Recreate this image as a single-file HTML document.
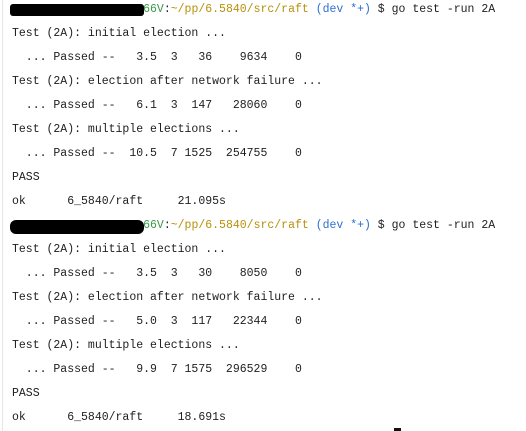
<!DOCTYPE html>
<html><head><meta charset="utf-8"><style>
html,body{margin:0;padding:0;background:#fff;width:526px;height:431px;overflow:hidden;position:relative}
.l{position:absolute;left:12px;font-family:"Liberation Mono",monospace;font-size:11.5px;color:#1e1e1e;white-space:pre;line-height:14px}
.g{color:#3b9a4a}.y{color:#b8900a}.b{color:#2d6fd0}
.blk{position:absolute;background:#000;border-radius:6px}
.bar{position:absolute;left:2px;top:0;width:1px;height:431px;background:#e6e6e6}
</style></head><body>
<div class="bar"></div>
<div class="l" style="top:3px">                   <span class="g">66V</span>:<span class="y">~/pp/6.5840/src/raft</span> <span class="b">(dev *+)</span> $ go test -run 2A</div>
<div class="blk" style="left:10px;top:4px;width:134px;height:12px;border-radius:3px"></div>
<div class="l" style="top:27px">Test (2A): initial election ...</div>
<div class="l" style="top:51px">  ... Passed --   3.5  3   36    9634    0</div>
<div class="l" style="top:75px">Test (2A): election after network failure ...</div>
<div class="l" style="top:99px">  ... Passed --   6.1  3  147   28060    0</div>
<div class="l" style="top:123px">Test (2A): multiple elections ...</div>
<div class="l" style="top:147px">  ... Passed --  10.5  7 1525  254755    0</div>
<div class="l" style="top:171px">PASS</div>
<div class="l" style="top:195px">ok      6_5840/raft     21.095s</div>
<div class="l" style="top:219px">                   <span class="g">66V</span>:<span class="y">~/pp/6.5840/src/raft</span> <span class="b">(dev *+)</span> $ go test -run 2A</div>
<div class="blk" style="left:10px;top:220px;width:134px;height:14px"></div>
<div class="l" style="top:243px">Test (2A): initial election ...</div>
<div class="l" style="top:267px">  ... Passed --   3.5  3   30    8050    0</div>
<div class="l" style="top:291px">Test (2A): election after network failure ...</div>
<div class="l" style="top:315px">  ... Passed --   5.0  3  117   22344    0</div>
<div class="l" style="top:339px">Test (2A): multiple elections ...</div>
<div class="l" style="top:363px">  ... Passed --   9.9  7 1575  296529    0</div>
<div class="l" style="top:387px">PASS</div>
<div class="l" style="top:411px">ok      6_5840/raft     18.691s</div>
<div style="position:absolute;left:394px;top:428px;width:7px;height:3px;background:#111"></div>
</body></html>
